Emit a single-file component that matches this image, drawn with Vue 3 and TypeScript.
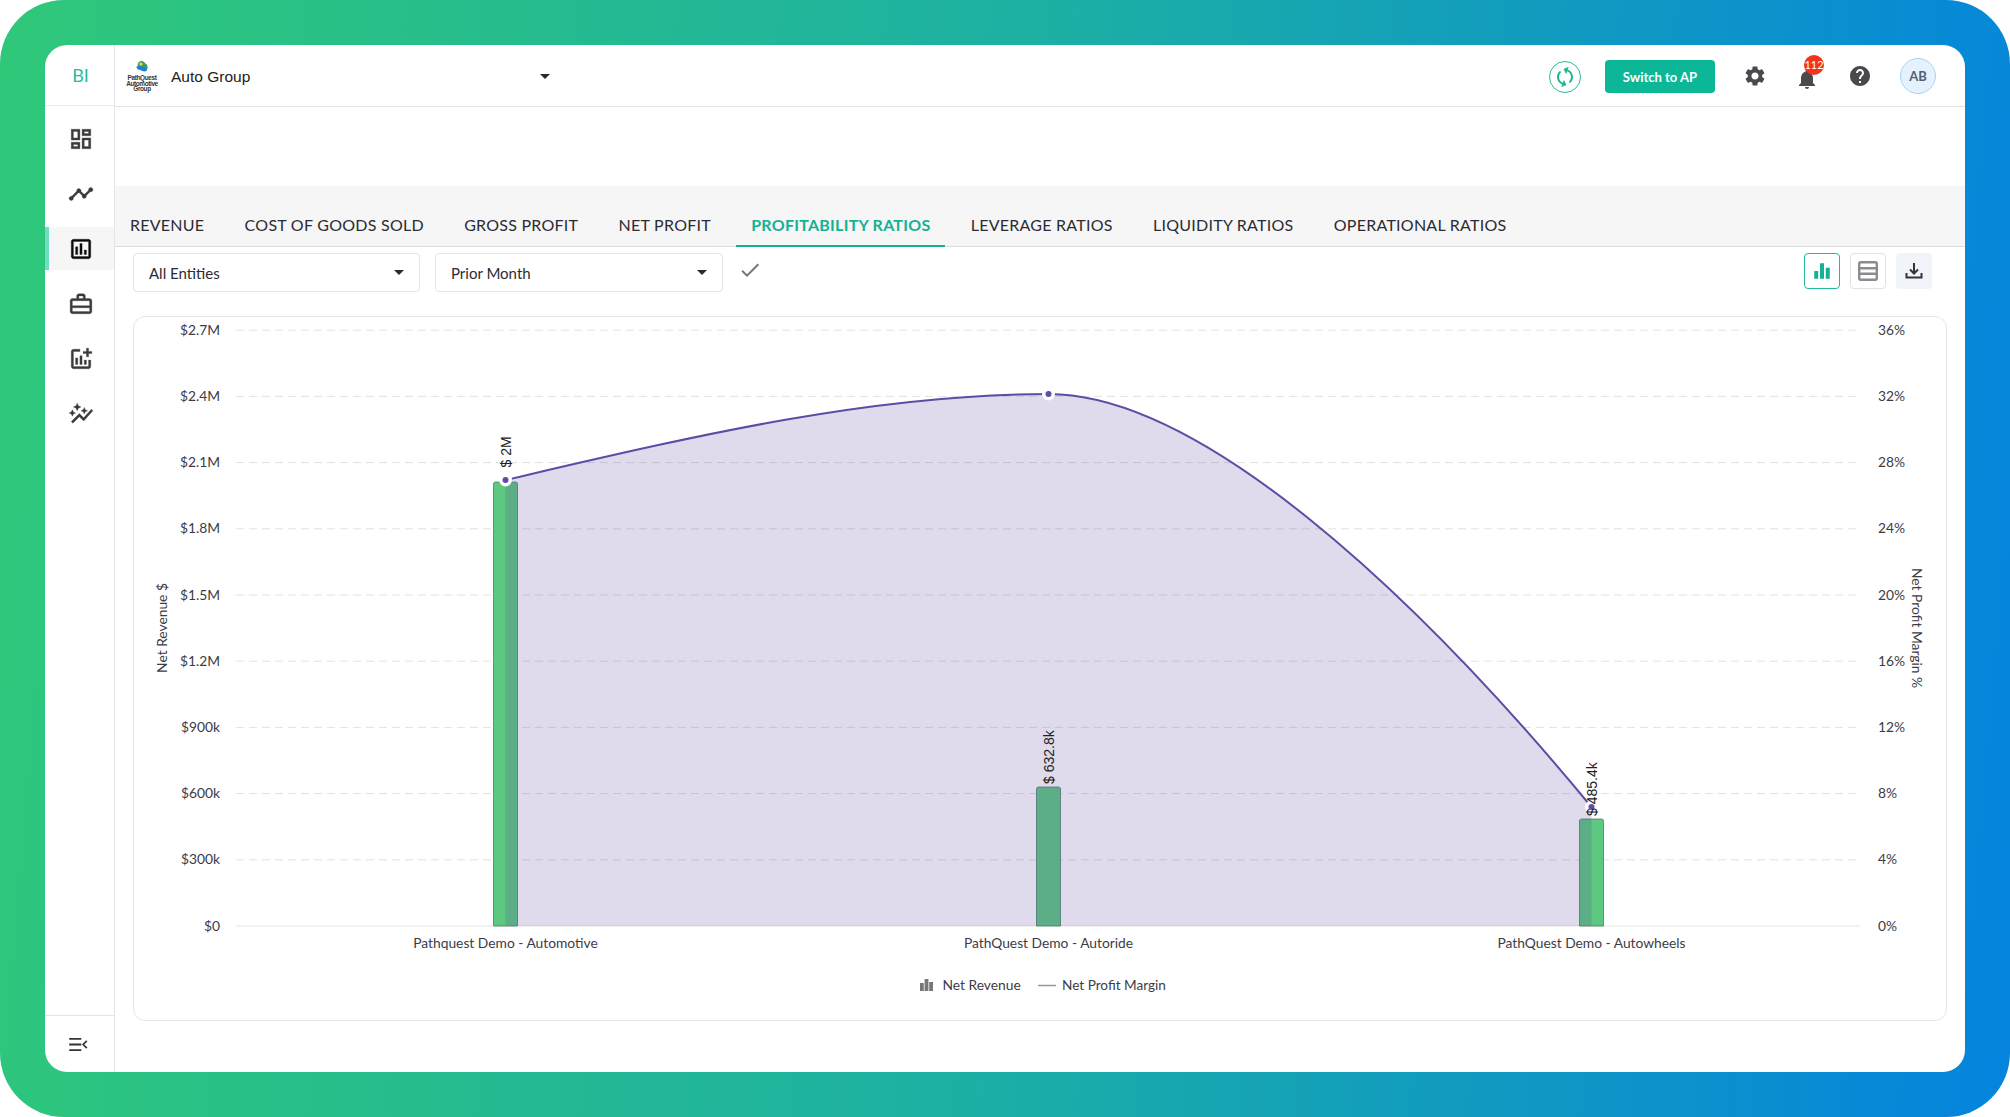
<script setup lang="ts">
const tabs = [
  'REVENUE',
  'COST OF GOODS SOLD',
  'GROSS PROFIT',
  'NET PROFIT',
  'PROFITABILITY RATIOS',
  'LEVERAGE RATIOS',
  'LIQUIDITY RATIOS',
  'OPERATIONAL RATIOS',
]
const activeTab = 'PROFITABILITY RATIOS'

const navIcons = [
  'M19 5v2h-4V5h4M9 5v6H5V5h4m10 8v6h-4v-6h4M9 17v2H5v-2h4M21 3h-8v6h8V3zM11 3H3v10h8V3zm10 8h-8v10h8V11zm-10 4H3v6h8v-6z',
  'M23 8c0 1.1-.9 2-2 2-.18 0-.35-.02-.51-.07l-3.56 3.55c.05.16.07.34.07.52 0 1.1-.9 2-2 2s-2-.9-2-2c0-.18.02-.36.07-.52l-2.55-2.55c-.16.05-.34.07-.52.07s-.36-.02-.52-.07l-4.55 4.56c.05.16.07.33.07.51 0 1.1-.9 2-2 2s-2-.9-2-2 .9-2 2-2c.18 0 .35.02.51.07l4.56-4.55C8.02 9.36 8 9.18 8 9c0-1.1.9-2 2-2s2 .9 2 2c0 .18-.02.36-.07.52l2.55 2.55c.16-.05.34-.07.52-.07s.36.02.52.07l3.55-3.56C19.02 8.35 19 8.18 19 8c0-1.1.9-2 2-2s2 .9 2 2z',
  'M19 3H5c-1.1 0-2 .9-2 2v14c0 1.1.9 2 2 2h14c1.1 0 2-.9 2-2V5c0-1.1-.9-2-2-2zm0 16H5V5h14v14zM7 10h2v7H7zm4-3h2v10h-2zm4 6h2v4h-2z',
  'M10 2.5h4c1.1 0 2 .9 2 2V7h4c1.1 0 2 .9 2 2v10c0 1.1-.9 2-2 2H4c-1.1 0-2-.9-2-2V9c0-1.1.9-2 2-2h4V4.5c0-1.1.9-2 2-2zm0 2V7h4V4.5h-4zM4 9v4.5h16V9H4zm16 6.5H4V19h16v-3.5z',
  'M22 5v2h-3v3h-2V7h-3V5h3V2h2v3h3zm-3 14H5V5h6V3H5c-1.1 0-2 .9-2 2v14c0 1.1.9 2 2 2h14c1.1 0 2-.9 2-2v-6h-2v6zm-4-6v4h2v-4h-2zm-4 4h2V9h-2v8zm-2 0v-6H7v6h2z',
  'M14.06 9.94 12 9l2.06-.94L15 6l.94 2.06L18 9l-2.06.94L15 12l-.94-2.06zM4 14l.94-2.06L7 11l-2.06-.94L4 8l-.94 2.06L1 11l2.06.94L4 14zm4.5-5 1.09-2.41L12 5.5 9.59 4.41 8.5 2 7.41 4.41 5 5.5l2.41 1.09L8.5 9zm-4 11.5 6-6.01 4 4L23 8.93l-1.41-1.41-7.09 7.97-4-4L3 19l1.5 1.5z',
]
const activeNav = 2

const baseY = 926
const stepY = 66.2
const leftTicks = ['$0', '$300k', '$600k', '$900k', '$1.2M', '$1.5M', '$1.8M', '$2.1M', '$2.4M', '$2.7M']
const rightTicks = ['0%', '4%', '8%', '12%', '16%', '20%', '24%', '28%', '32%', '36%']
const ticks = leftTicks.map((left, i) => ({
  left,
  right: rightTicks[i],
  y: baseY - i * stepY,
}))

const bars = [
  { x: 505.5, top: 482, name: 'Pathquest Demo - Automotive', label: '$ 2M', labelY: 467.5 },
  { x: 1048.5, top: 787, name: 'PathQuest Demo - Autoride', label: '$ 632.8k', labelY: 784 },
  { x: 1591.5, top: 819, name: 'PathQuest Demo - Autowheels', label: '$ 485.4k', labelY: 816 },
]
const barW = 24

const linePath = 'M505.5 480 C686 438 868 394 1048.5 394 C1199 394 1411.5 589 1591.5 807'
const areaPath = linePath + ' L1591.5 926 L505.5 926 Z'
const dots = [
  { x: 505.5, y: 480 },
  { x: 1048.5, y: 394 },
  { x: 1591.5, y: 807 },
]

function barPath(x: number, top: number): string {
  const l = x - barW / 2
  const r = x + barW / 2
  return `M${l} ${baseY} V${top + 2} Q${l} ${top} ${l + 2} ${top} H${r - 2} Q${r} ${top} ${r} ${top + 2} V${baseY} Z`
}
</script>

<template>
  <div class="frame">
    <div class="shell">
      <aside class="sidebar">
        <div class="brand">BI</div>
        <nav class="nav">
          <div v-for="(d, i) in navIcons" :key="i" class="nav-item" :class="{ active: i === activeNav }">
            <svg class="nav-icon" viewBox="0 0 24 24"><path :d="d" /></svg>
          </div>
        </nav>
        <div class="collapse">
          <svg class="collapse-icon" viewBox="0 0 20 14">
            <path d="M0 1h13M0 7h13M0 13h13" />
            <path class="chev" d="M19 3l-4 4 4 4" />
          </svg>
        </div>
      </aside>

      <main class="main">
        <header class="header">
          <div class="company">
            <div class="logo">
              <svg class="logo-mark" viewBox="0 0 20 16">
                <path d="M6 1c3-2 7-1 8 2 3 1 4 5 2 8-3 3-6 1-8-1C5 9 3 4 6 1z" fill="#2f9f6f" />
                <path d="M7 2c2-1 4 0 4 2s-3 2-4 1-1-2 0-3z" fill="#e2d13a" />
                <path d="M3 7c3-2 6 0 9 1 2 1 4 2 4 4-3 2-6 0-8-1-2 0-5-1-5-4z" fill="#1f7fd8" />
              </svg>
              <span class="logo-text">PathQuest<br />Automotive<br />Group</span>
            </div>
            <span class="company-name">Auto Group</span>
            <span class="caret company-caret"></span>
          </div>
          <div class="actions">
            <div class="sync">
              <svg class="sync-icon" viewBox="0 0 24 24">
                <path d="M12 4V1L8 5l4 4V6c3.31 0 6 2.69 6 6 0 1.01-.25 1.97-.7 2.8l1.46 1.46C19.54 15.03 20 13.57 20 12c0-4.42-3.58-8-8-8zm0 14c-3.31 0-6-2.69-6-6 0-1.01.25-1.97.7-2.8L5.24 7.74C4.46 8.97 4 10.43 4 12c0 4.42 3.58 8 8 8v3l4-4-4-4v3z" />
              </svg>
            </div>
            <button class="switch-btn">Switch to AP</button>
            <svg class="head-icon gear" viewBox="0 0 24 24">
              <path d="M19.14 12.94c.04-.3.06-.61.06-.94 0-.32-.02-.64-.07-.94l2.03-1.58c.18-.14.23-.41.12-.61l-1.92-3.32c-.12-.22-.37-.29-.59-.22l-2.39.96c-.5-.38-1.03-.7-1.62-.94l-.36-2.54c-.04-.24-.24-.41-.48-.41h-3.84c-.24 0-.43.17-.47.41l-.36 2.54c-.59.24-1.13.57-1.62.94l-2.39-.96c-.22-.08-.47 0-.59.22L2.74 8.87c-.12.21-.08.47.12.61l2.03 1.58c-.05.3-.09.63-.09.94s.02.64.07.94l-2.03 1.58c-.18.14-.23.41-.12.61l1.92 3.32c.12.22.37.29.59.22l2.39-.96c.5.38 1.03.7 1.62.94l.36 2.54c.05.24.24.41.48.41h3.84c.24 0 .44-.17.47-.41l.36-2.54c.59-.24 1.13-.56 1.62-.94l2.39.96c.22.08.47 0 .59-.22l1.92-3.32c.12-.22.07-.47-.12-.61l-2.01-1.58zM12 15.6c-1.98 0-3.6-1.62-3.6-3.6s1.62-3.6 3.6-3.6 3.6 1.62 3.6 3.6-1.62 3.6-3.6 3.6z" />
            </svg>
            <div class="bell-wrap">
              <svg class="head-icon bell" viewBox="0 0 24 24">
                <path d="M12 22c1.1 0 2-.9 2-2h-4c0 1.1.89 2 2 2zm6-6v-5c0-3.07-1.64-5.64-4.5-6.32V4c0-.83-.67-1.5-1.5-1.5s-1.5.67-1.5 1.5v.68C7.63 5.36 6 7.92 6 11v5l-2 2v1h16v-1l-2-2z" />
              </svg>
              <span class="badge">112</span>
            </div>
            <svg class="head-icon help" viewBox="0 0 24 24">
              <path d="M12 2C6.48 2 2 6.48 2 12s4.48 10 10 10 10-4.48 10-10S17.52 2 12 2zm1 17h-2v-2h2v2zm2.07-7.75l-.9.92C13.45 12.9 13 13.5 13 15h-2v-.5c0-1.1.45-2.1 1.17-2.83l1.24-1.26c.37-.36.59-.86.59-1.41 0-1.1-.9-2-2-2s-2 .9-2 2H8c0-2.21 1.79-4 4-4s4 1.79 4 4c0 .88-.36 1.68-.93 2.25z" />
            </svg>
            <div class="avatar">AB</div>
          </div>
        </header>

        <div class="spacer"></div>

        <div class="tabs">
          <div v-for="t in tabs" :key="t" class="tab" :class="{ active: t === activeTab }">{{ t }}</div>
        </div>

        <div class="body">
          <div class="toolbar">
            <div class="select first"><span>All Entities</span><span class="caret"></span></div>
            <div class="select second"><span>Prior Month</span><span class="caret"></span></div>
            <svg class="check" viewBox="0 0 24 24">
              <path d="M9 16.17L4.83 12l-1.42 1.41L9 19 21 7l-1.41-1.41z" />
            </svg>
            <div class="tools">
              <div class="tool selected">
                <svg viewBox="0 0 18 18"><path d="M2 9h3.6v7H2zM7.2 2h3.6v14H7.2zM12.4 6H16v10h-3.6z" /></svg>
              </div>
              <div class="tool outlined">
                <svg viewBox="0 0 20 20">
                  <rect x="1.2" y="1.2" width="17.6" height="17.6" rx="1.5" />
                  <path d="M1.2 7.2h17.6M1.2 12.8h17.6" />
                </svg>
              </div>
              <div class="tool soft">
                <svg viewBox="0 0 20 20">
                  <path d="M10 2v10M6 8.5l4 4 4-4M2.5 12v4.5h15V12" />
                </svg>
              </div>
            </div>
          </div>

          <section class="chart-card">
            <svg class="chart" viewBox="134 317 1812 703">
              <g v-for="t in ticks" :key="t.left">
                <line
                  class="grid"
                  :class="{ base: t.left === '$0' }"
                  x1="236"
                  x2="1860"
                  :y1="t.y"
                  :y2="t.y"
                />
                <text class="tick" x="220" :y="t.y + 4.5" text-anchor="end">{{ t.left }}</text>
                <text class="tick" x="1878" :y="t.y + 4.5">{{ t.right }}</text>
              </g>

              <text class="tick" transform="translate(167 628) rotate(-90)" text-anchor="middle">Net Revenue $</text>
              <text class="tick" transform="translate(1912 628) rotate(90)" text-anchor="middle">Net Profit Margin %</text>

              <path v-for="b in bars" :key="b.name" class="bar" :d="barPath(b.x, b.top)" />
              <path class="area" :d="areaPath" />
              <path class="line" :d="linePath" />
              <g v-for="d in dots" :key="d.x">
                <circle class="dot-halo" :cx="d.x" :cy="d.y" r="6.5" />
                <circle class="dot" :cx="d.x" :cy="d.y" r="3" />
              </g>

              <g v-for="b in bars" :key="b.label">
                <text class="bar-label" :transform="`translate(${b.x + 5} ${b.labelY}) rotate(-90)`">{{ b.label }}</text>
                <text class="tick" :x="b.x" y="948" text-anchor="middle">{{ b.name }}</text>
              </g>

              <path class="legend-bars" d="M920 991v-8h3.8v8zM924.6 991v-12h3.8v12zM929.2 991v-9h3.8v9z" />
              <text class="tick" x="942.5" y="990">Net Revenue</text>
              <line class="legend-line" x1="1038" x2="1056" y1="985.5" y2="985.5" />
              <text class="tick legend-tight" x="1062" y="990">Net Profit Margin</text>
            </svg>
          </section>
        </div>
      </main>
    </div>
  </div>
</template>

<style>
html,
body {
  margin: 0;
  background: #fff;
}
</style>

<style scoped>
.frame {
  width: 2010px;
  height: 1117px;
  box-sizing: border-box;
  padding: 45px;
  border-radius: 64px;
  background: linear-gradient(95deg, #2fc879 0%, #1cb0a4 50%, #0484de 100%);
  font-family: Lato, "Liberation Sans", sans-serif;
  color: #2b2b33;
  overflow: hidden;
}
.shell {
  height: 100%;
  display: flex;
  background: #fff;
  border-radius: 22px;
  overflow: hidden;
}
.sidebar {
  width: 69px;
  flex: none;
  box-sizing: content-box;
  border-right: 1px solid #e5e5e5;
  display: flex;
  flex-direction: column;
}
.brand {
  height: 60px;
  padding-left: 2px;
  border-bottom: 1px solid #ececec;
  display: flex;
  align-items: center;
  justify-content: center;
  color: #27bda6;
  font-size: 18px;
}
.nav {
  flex: 1;
  padding-top: 11px;
}
.nav-item {
  height: 43px;
  margin-bottom: 12px;
  padding-left: 2px;
  display: flex;
  align-items: center;
  justify-content: center;
}
.nav-item.active {
  background: #f6f6f6;
  box-shadow: inset 4px 0 0 #6fdcc3;
}
.nav-icon {
  width: 26px;
  height: 26px;
  fill: #3a3a3e;
  stroke: #3a3a3e;
  stroke-width: 0.3;
}
.nav-item.active .nav-icon {
  fill: #0c0c10;
  stroke: #0c0c10;
}
.collapse {
  height: 56px;
  padding-right: 2px;
  border-top: 1px solid #e5e5e5;
  display: flex;
  align-items: center;
  justify-content: center;
}
.collapse-icon {
  width: 19px;
  height: 13px;
  fill: none;
  stroke: #33333a;
  stroke-width: 2;
}
.chev {
  stroke-width: 1.8;
}
.main {
  flex: 1;
  min-width: 0;
  display: flex;
  flex-direction: column;
}
.header {
  height: 62px;
  flex: none;
  box-sizing: border-box;
  padding-top: 2px;
  border-bottom: 1px solid #e2e2e2;
  display: flex;
  align-items: center;
  justify-content: space-between;
}
.company {
  display: flex;
  align-items: center;
  margin-left: 12px;
}
.logo {
  width: 30px;
  display: flex;
  flex-direction: column;
  align-items: center;
}
.logo-mark {
  width: 16px;
  height: 13px;
}
.logo-text {
  font-family: "Liberation Sans", sans-serif;
  font-size: 6.4px;
  font-weight: 700;
  letter-spacing: -0.35px;
  line-height: 5.6px;
  text-align: center;
  color: #333;
  white-space: nowrap;
  margin-top: 1px;
}
.company-name {
  margin-left: 14px;
  width: 369px;
  font-family: "Liberation Sans", sans-serif;
  font-size: 15.5px;
  color: #222;
}
.caret {
  display: inline-block;
  width: 0;
  height: 0;
  border-left: 5px solid transparent;
  border-right: 5px solid transparent;
  border-top: 5.5px solid #2a2a35;
}
.actions {
  display: flex;
  align-items: center;
}
.sync {
  width: 32px;
  height: 32px;
  box-sizing: border-box;
  border: 1px solid #2bb99a;
  border-radius: 50%;
  display: flex;
  align-items: center;
  justify-content: center;
  margin-right: 24px;
}
.sync-icon {
  width: 24px;
  height: 24px;
  fill: #1cb796;
  transform: rotate(20deg);
}
.switch-btn {
  width: 110px;
  height: 33px;
  border: 0;
  border-radius: 4px;
  background: #0bb796;
  color: #fff;
  font-family: inherit;
  font-size: 13px;
  font-weight: 700;
  padding: 0;
  margin-right: 28px;
}
.head-icon {
  width: 24px;
  height: 24px;
  fill: #4a4a4e;
  display: block;
}
.gear {
  margin-right: 28px;
  margin-top: -1px;
}
.bell-wrap {
  position: relative;
  width: 24px;
  height: 24px;
  margin-right: 29px;
  top: 2px;
}
.badge {
  position: absolute;
  left: 9px;
  top: -12px;
  width: 20px;
  height: 20px;
  border-radius: 50%;
  background: #f5321a;
  color: #fff;
  font-size: 11px;
  line-height: 20px;
  text-align: center;
}
.help {
  margin-right: 28px;
  margin-top: -1px;
}
.avatar {
  width: 36px;
  height: 36px;
  box-sizing: border-box;
  border: 1px solid #a9d2f2;
  border-radius: 50%;
  background: #e5f1fc;
  color: #555e72;
  font-size: 13px;
  font-weight: 700;
  display: flex;
  align-items: center;
  justify-content: center;
  margin-right: 29px;
  margin-top: -1px;
}
.spacer {
  height: 79px;
  flex: none;
}
.tabs {
  height: 60px;
  flex: none;
  box-sizing: content-box;
  background: #f6f6f6;
  border-bottom: 1px solid #dcdcdc;
  display: flex;
  align-items: flex-end;
  gap: 10.3px;
}
.tab {
  height: 41px;
  padding: 0 15px;
  font-size: 16px;
  letter-spacing: 0.25px;
  line-height: 37px;
  color: #2b2b33;
  white-space: nowrap;
  box-sizing: border-box;
  margin-bottom: -1px;
}
.tab.active {
  color: #12b293;
  font-weight: 700;
  border-bottom: 2px solid #12b293;
}
.body {
  flex: 1;
  min-height: 0;
  display: flex;
  flex-direction: column;
  padding: 6px 18px 51px 18px;
}
.toolbar {
  height: 63px;
  flex: none;
  display: flex;
  align-items: flex-start;
}
.select {
  height: 39px;
  box-sizing: border-box;
  border: 1px solid #e6e6e6;
  border-radius: 4px;
  padding: 0 15px;
  display: flex;
  align-items: center;
  justify-content: space-between;
  font-size: 15px;
  color: #2b2b33;
}
.select.first {
  width: 287px;
  margin-right: 15px;
}
.select.second {
  width: 288px;
  margin-right: 15px;
}
.check {
  width: 24px;
  height: 24px;
  fill: #77777a;
  margin-top: 5px;
}
.tools {
  margin-left: auto;
  margin-right: 15px;
  display: flex;
  gap: 10px;
}
.tool {
  width: 36px;
  height: 36px;
  box-sizing: border-box;
  border-radius: 4px;
  display: flex;
  align-items: center;
  justify-content: center;
}
.tool svg {
  width: 20px;
  height: 20px;
}
.selected {
  border: 1px solid #21b9a0;
}
.selected path {
  fill: #12b293;
}
.outlined {
  border: 1px solid #e2e2e2;
}
.outlined svg {
  fill: none;
  stroke: #8b8b90;
  stroke-width: 2.4;
}
.soft {
  background: #f1f4f8;
}
.soft svg {
  fill: none;
  stroke: #33333c;
  stroke-width: 2;
}
.chart-card {
  flex: 1;
  min-height: 0;
  box-sizing: border-box;
  border: 1px solid #e6e6e6;
  border-radius: 12px;
}
.chart {
  display: block;
  width: 100%;
  height: 100%;
}
.grid {
  stroke: #e2e2e2;
  stroke-width: 1;
  stroke-dasharray: 8 5;
}
.grid.base {
  stroke-dasharray: none;
  stroke: #e4e4e4;
}
.tick {
  font-family: Lato, "Liberation Sans", sans-serif;
  font-size: 13.8px;
  fill: #3c3c46;
}
.legend-tight {
  font-size: 13.6px;
}
.bar {
  fill: #5cc880;
  stroke: #4b7d6a;
  stroke-width: 0.8;
}
.area {
  fill: #5e44a0;
  fill-opacity: 0.2;
}
.line {
  fill: none;
  stroke: #5f4ba3;
  stroke-width: 2;
}
.dot-halo {
  fill: #fff;
}
.dot {
  fill: #5f4ba3;
}
.bar-label {
  font-family: "Liberation Sans", sans-serif;
  font-size: 14px;
  fill: #222;
}
.legend-bars {
  fill: #777;
}
.legend-line {
  stroke: #999;
  stroke-width: 1.5;
}
</style>
